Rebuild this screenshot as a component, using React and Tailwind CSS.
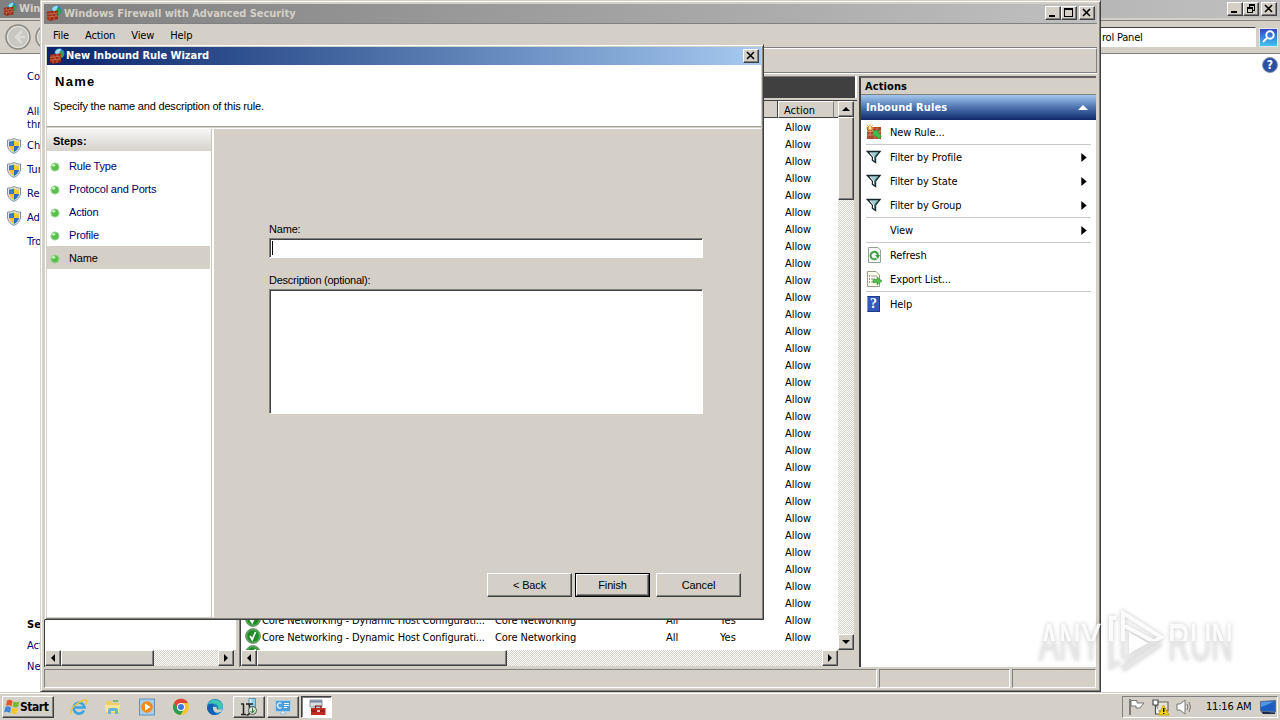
import React from 'react';

const steps = ['Rule Type', 'Protocol and Ports', 'Action', 'Profile', 'Name'];

const actions = [
  { label: 'New Rule...', icon: 'rule', line: true },
  { label: 'Filter by Profile', icon: 'filter', arrow: true },
  { label: 'Filter by State', icon: 'filter', arrow: true },
  { label: 'Filter by Group', icon: 'filter', arrow: true, line: true },
  { label: 'View', arrow: true, line: true },
  { label: 'Refresh', icon: 'refresh' },
  { label: 'Export List...', icon: 'export', line: true },
  { label: 'Help', icon: 'help' },
];

const rules = Array.from({ length: 32 }, (_, i) => i);
// rows above this one lie under the wizard, only their last column shows
const firstOpenRow = 29;

const raised =
  'bg-[#d4d0c8] border border-t-white border-l-white border-r-[#404040] border-b-[#404040] shadow-[inset_-1px_-1px_0_#808080]';
const track = 'bg-[repeating-conic-gradient(#ffffff_0_25%,#d4d0c8_0_50%)] bg-[length:2px_2px]';
const tahoma = "font-['DejaVu_Sans_Condensed','DejaVu_Sans',sans-serif]";
const sans = "font-['Liberation_Sans',Arial,sans-serif]";

const FirewallIcon = ({ className }) => (
  <svg viewBox="0 0 16 16" className={className}>
    <circle cx="10.5" cy="5.5" r="5" fill="#2b86c5" />
    <path d="M6 4Q8 0 12 1L11 5L8 7Z" fill="#8fdcf5" />
    <path d="M11 3Q15 3 15 7Q14 10 12 10L10 7Z" fill="#2fa24b" />
    <path d="M1 6.500L12 5.500V14L4 16L1 14Z" fill="#9c2c16" />
    <path d="M1 9.500L12 8M1 12L12 11M4 7V9M8 6V8.5M6 9V12M10 8.5V11M4 12V15M8 11.5V15" stroke="#d98a6e" strokeWidth=".6" />
  </svg>
);

const Shield = () => (
  <svg viewBox="0 0 16 16" className="h-4 w-4 shrink-0">
    <path d="M8 .5Q11 2.5 14.500 2V8Q13.500 13 8 15.500Q2.500 13 1.500 8V2Q5 2.500 8 .5Z" fill="#dfe6ea" stroke="#83939d" />
    <path d="M8 2.500V8H3V3.500Q6 3.500 8 2.500Z" fill="#3a78c9" />
    <path d="M8 2.500Q10.500 4 13 3.500V8H8Z" fill="#f5d02c" />
    <path d="M3 8H8V14Q4 12 3 8Z" fill="#f5c51c" />
    <path d="M8 8H13Q12 12 8 14Z" fill="#2e6bbd" />
  </svg>
);

const Dot = () => (
  <svg viewBox="0 0 10 10" className="relative top-px h-[10px] w-[10px]">
    <circle cx="5" cy="5" r="4.300" fill="#5abd4c" />
    <circle cx="5" cy="5" r="4" fill="none" stroke="#a2dc9b" strokeWidth=".8" />
    <ellipse cx="3.600" cy="3.300" rx="1.800" ry="1.400" fill="#c4f0bd" />
  </svg>
);

const Check = () => (
  <svg viewBox="0 0 16 16" className="h-4 w-4 shrink-0">
    <circle cx="8" cy="8" r="7.400" fill="#1f8a26" stroke="#7d8d7d" />
    <circle cx="8" cy="8" r="6.300" fill="none" stroke="#8fd08f" strokeWidth=".6" />
    <path d="M5 8L7.200 11.500L10.500 4" fill="none" stroke="#fff" strokeWidth="1.800" />
  </svg>
);

const ActionIcon = ({ type }) => {
  if (type === 'rule')
    return (
      <svg viewBox="0 0 16 16" className="h-4 w-4">
        <path d="M1 3H15V15H1Z" fill="#b04a32" />
        <path d="M1 7.500H15M1 11H15M6 4V7M11 4V7M4 8V11M9 11V15M13 8V11" stroke="#d98f78" strokeWidth=".8" />
        <path d="M7 6.500L13 6.500L11.500 8.500L15.500 12L13 15L9 11L7 12.500Z" fill="#3fc24a" stroke="#2a8c36" strokeWidth=".5" />
        <path d="M4 0V8M0 4H8M1 1L7 7M7 1L1 7" stroke="#f3a63a" strokeWidth="1" />
        <circle cx="4" cy="4" r="1.500" fill="#fff2a8" />
      </svg>
    );
  if (type === 'filter')
    return (
      <svg viewBox="0 0 16 16" className="h-4 w-4">
        <path d="M1.500 2.500H14L9.500 8V13.500L6.500 11.500V8Z" fill="#9fcdd2" stroke="#17292e" strokeWidth="1.400" />
        <path d="M4 4L7.500 8V11" fill="none" stroke="#fff" />
        <path d="M11.500 4L8.700 8V12" fill="none" stroke="#44767b" />
      </svg>
    );
  if (type === 'refresh')
    return (
      <svg viewBox="0 0 16 16" className="h-4 w-4">
        <path d="M2.500 .5H12L14.500 3V15.500H2.500Z" fill="#f5f8f5" stroke="#96a296" />
        <path d="M10.500 11.500A3.700 3.700 0 1 1 12 8.500" fill="none" stroke="#3fa047" strokeWidth="2" />
        <path d="M9 8H14L12 12Z" fill="#3fa047" />
      </svg>
    );
  if (type === 'export')
    return (
      <svg viewBox="0 0 16 16" className="h-4 w-4">
        <path d="M1.500 .5H10L13.500 4V15.500H1.500Z" fill="#fffef0" stroke="#9a9a86" />
        <path d="M3 5H4M3 8H4M3 11H4" stroke="#333" />
        <path d="M5 5H11M5 8H9M5 11H9" stroke="#9a9a9a" />
        <path d="M7 8.500H11V6L16 10L11 14V11.500H7Z" fill="#57bd4b" stroke="#2f8f31" strokeWidth=".6" />
      </svg>
    );
  if (type === 'help')
    return (
      <span className="ml-px flex h-4 w-[13px] items-center justify-center border border-[#1c3c8c] border-l-[#7f98d8] bg-[#3459b8] font-['Liberation_Serif',serif] text-[14px] font-bold leading-none text-white">
        ?
      </span>
    );
  return null;
};

const Caption = ({ kind }) => (
  <span className={`flex h-[14px] w-4 items-center justify-center ${raised}`}>
    <svg viewBox="0 0 12 10" className="h-[10px] w-3" shapeRendering="crispEdges" fill="none" stroke="#000">
      {kind === 'min' && <path d="M2 8H8" strokeWidth="2" />}
      {kind === 'max' && <path d="M1.500 1V8.500H9.500V1M1 1H10" strokeWidth="1.400" />}
      {kind === 'restore' && <path d="M4 1H10M4.500 1V3M9.500 1V6.500H8M2 4H8M2.500 4V8.500H7.500V4" strokeWidth="1.300" />}
      {kind === 'close' && <path d="M2 1L9 8M9 1L2 8" strokeWidth="1.600" shapeRendering="auto" />}
    </svg>
  </span>
);

const ArrowButton = ({ dir }) => (
  <span className={`flex h-4 w-4 shrink-0 items-center justify-center ${raised}`}>
    <svg viewBox="0 0 8 8" className="h-2 w-2">
      {dir === 'left' && <path d="M6 0V8L2 4Z" />}
      {dir === 'right' && <path d="M2 0V8L6 4Z" />}
      {dir === 'up' && <path d="M0 6H8L4 2Z" />}
      {dir === 'down' && <path d="M0 2H8L4 6Z" />}
    </svg>
  </span>
);

const ControlPanel = () => (
  <div className={`absolute inset-x-0 top-0 h-[692px] bg-white text-[11px] ${tahoma}`}>
    <div className="flex h-[18px] items-center justify-between bg-linear-to-r from-[#808080] to-[#c0c0c0] pl-[3px] pr-[3px]">
      <div className="flex items-center gap-[2px] font-bold text-[#d4d0c8]">
        <FirewallIcon className="h-[14px] w-[14px]" />
        <span className="pt-px">Windows Firewall</span>
      </div>
      <div className="flex">
        <Caption kind="min" />
        <Caption kind="restore" />
        <span className="w-[2px]" />
        <Caption kind="close" />
      </div>
    </div>
    <div className="h-[2px] bg-[#d4d0c8]" />
    <div className="flex h-[34px] items-center justify-between border-y border-[#808080] bg-[#d4d0c8] pl-[5px] pr-[2px]">
      <div className="flex gap-1">
        {['M17 7L11 13L17 19M11 13H20', 'M9 7L15 13L9 19'].map((d) => (
          <svg key={d} viewBox="0 0 26 26" className="h-[26px] w-[26px]">
            <circle cx="13" cy="13" r="12" fill="#c9c7c2" stroke="#8a8883" strokeWidth="1.500" />
            <circle cx="13" cy="13" r="10.500" fill="none" stroke="#e9e7e2" />
            <path d={d} fill="none" stroke="#dedcd7" strokeWidth="2.500" />
          </svg>
        ))}
      </div>
      <div className="flex items-center gap-[3px]">
        <div className="flex h-5 w-[180px] items-center border border-t-[#404040] border-b-white border-r-white bg-white pl-[25px] pt-[2px]">
          <span className="tracking-[-0.2px]">rol Panel</span>
        </div>
        <span className="flex h-[19px] w-[19px] items-center justify-center border border-[#dfe6f2] bg-linear-to-b from-[#3346c4] to-[#45c2ee]">
          <svg viewBox="0 0 16 16" className="h-4 w-4" fill="none" stroke="#fff" strokeWidth="2">
            <circle cx="9" cy="6" r="3.700" />
            <path d="M6 9L2 13" />
          </svg>
        </span>
      </div>
    </div>
    <div className="flex justify-between">
      <div className="flex flex-col pl-[27px] pt-4 text-[#00006b]">
        <span className="h-[35px] leading-[14px]">Control Panel Home</span>
        <span className="h-[13px] leading-[14px]">Allow a program</span>
        <span className="h-4 leading-[14px]">through</span>
        {['Change', 'Turn', 'Restore', 'Advanced'].map((t) => (
          <span key={t} className="-ml-[21px] flex h-6 items-center gap-[5px]">
            <Shield />
            {t}
          </span>
        ))}
        <span className="h-6 leading-6">Troubleshoot</span>
        <span className="mt-[364px] h-[21px] leading-[14px] font-bold text-black">See also</span>
        <span className="h-[21px] leading-[14px]">Action Center</span>
        <span className="leading-[14px]">Network</span>
      </div>
      <span className="mr-[2px] mt-[3px] flex h-4 w-4 items-center justify-center rounded-full border border-[#8794b4] bg-[#2a51a3] text-[12px] font-bold text-white">
        ?
      </span>
    </div>
  </div>
);

const RuleList = () => (
  <div className="flex w-[618px] flex-col border-l border-[#808080] bg-white">
    <div className="mr-[2px] h-[22px] shrink-0 border-t border-[#808080] bg-[#404040]" />
    <div className="h-[2px] shrink-0 bg-[#d4d0c8]" />
    <div className="flex h-[550px] border-l border-t border-[#404040]">
      <div className="flex-1 overflow-hidden">
        <div className="flex h-[17px] justify-end bg-[#d4d0c8]">
          <span className="w-[200px] border-b border-r border-b-[#404040] border-r-[#404040]" />
          <span className="w-[56px] border border-t-white border-l-white border-r-[#808080] border-b-[#404040] pl-[5px] leading-[18px]">
            Action
          </span>
          <span className="w-1 border-b border-[#404040]" />
        </div>
        {rules.map((r) => (
          <div key={r} className="flex h-[17px] justify-between pl-1 pr-[27px] leading-[19px]">
            {r >= firstOpenRow && (
              <div className="flex">
                <Check />
                <span className="w-[234px] pl-px tracking-[-0.14px]">Core Networking - Dynamic Host Configurati...</span>
                <span className="w-[171px] tracking-[-0.1px]">Core Networking</span>
                <span className="w-[54px]">All</span>
                <span>Yes</span>
              </div>
            )}
            <span className="ml-auto tracking-[-0.1px]">Allow</span>
          </div>
        ))}
      </div>
      <div className={`flex w-4 flex-col ${track}`}>
        <ArrowButton dir="up" />
        <span className={`h-[83px] ${raised}`} />
        <span className="flex-1" />
        <ArrowButton dir="down" />
      </div>
      <div className="w-[3px] bg-[#d4d0c8]" />
    </div>
    <div className="flex h-4 border-l border-[#404040] bg-[#d4d0c8]">
      <div className={`flex w-[597px] ${track}`}>
        <ArrowButton dir="left" />
        <span className={`w-[250px] ${raised}`} />
        <span className="flex-1" />
        <ArrowButton dir="right" />
      </div>
    </div>
    <div className="h-px bg-[#d4d0c8]" />
  </div>
);

const ActionsPane = () => (
  <div className="flex w-[237px] flex-col border-l-2 border-t-2 border-l-[#404040] border-t-[#606060] bg-white">
    <div className="h-[17px] border-b border-[#808080] bg-[#d4d0c8] pl-1 font-bold leading-[17px] tracking-[0.1px]">Actions</div>
    <div className="flex h-[25px] items-center justify-between bg-linear-to-b from-[#a4c8ec] via-[#4d74b0] to-[#12286a] pl-[5px] pr-[8px] font-bold text-white">
      <span className="pt-[2px] tracking-[0.1px]">Inbound Rules</span>
      <svg viewBox="0 0 10 5" className="h-[5px] w-[10px]">
        <path d="M0 5H10L5 0Z" fill="#fff" />
      </svg>
    </div>
    {actions.map((a) => (
      <div key={a.label} className="px-[5px]">
        <div className="flex h-6 items-center">
          <span className="flex w-6 items-center">
            <ActionIcon type={a.icon} />
          </span>
          <span className="flex-1 pt-[2px] tracking-[-0.1px]">{a.label}</span>
          {a.arrow && (
            <svg viewBox="0 0 6 10" className="mr-1 h-[9px] w-[6px]">
              <path d="M0 0V10L6 5Z" />
            </svg>
          )}
        </div>
        {a.line && <div className="h-px bg-[#c8c8c8]" />}
      </div>
    ))}
  </div>
);

const FirewallWindow = () => (
  <div
    className={`absolute left-[40px] top-0 flex h-[692px] w-[1061px] flex-col border border-l-[#d4d0c8] border-t-[#d4d0c8] border-r-[#404040] border-b-[#404040] bg-[#d4d0c8] px-[3px] pb-[2px] pt-[3px] text-[11px] shadow-[inset_1px_1px_0_#fff,inset_-1px_-1px_0_#808080] ${tahoma}`}
  >
    <div className="flex h-[19px] shrink-0 items-center justify-between bg-linear-to-r from-[#808080] to-[#c0c0c0] pb-px pl-[2px] pr-[2px]">
      <div className="flex items-center gap-[2px] font-bold text-[#d4d0c8]">
        <FirewallIcon className="h-4 w-4" />
        <span className="pt-[2px] tracking-[-0.05px]">Windows Firewall with Advanced Security</span>
      </div>
      <div className="flex">
        <Caption kind="min" />
        <Caption kind="max" />
        <span className="w-[2px]" />
        <Caption kind="close" />
      </div>
    </div>
    <div className="flex h-[25px] shrink-0 items-center gap-4 border-b border-t border-[#808080] pl-[9px] pt-px tracking-[-0.12px]">
      <span>File</span>
      <span>Action</span>
      <span>View</span>
      <span>Help</span>
    </div>
    <div className="h-[25px] shrink-0 border-b border-r border-t border-b-[#808080] border-r-[#808080] border-t-white" />
    <div className="h-[3px] shrink-0 border-t border-white" />
    <div className="flex h-[591px] shrink-0">
      <div className="flex w-[192px] flex-col justify-end border-l border-t border-[#404040] bg-white">
        <div className="flex h-4 bg-white">
          <div className={`flex flex-1 ${track}`}>
            <ArrowButton dir="left" />
            <span className={`w-[93px] ${raised}`} />
            <span className="flex-1" />
            <ArrowButton dir="right" />
          </div>
          <div className="w-[2px] bg-[#d4d0c8]" />
        </div>
        <div className="h-px bg-[#d4d0c8]" />
      </div>
      <div className="w-[3px]" />
      <RuleList />
      <div className="w-[2px]" />
      <ActionsPane />
    </div>
    <div className="mt-[2px] flex h-[19px] shrink-0 gap-[2px]">
      <div className="w-[833px] border border-b-white border-l-[#808080] border-r-white border-t-[#808080]" />
      <div className="w-[131px] border border-b-white border-l-[#808080] border-r-white border-t-[#808080]" />
      <div className="w-[84px] border border-b-white border-l-[#808080] border-r-white border-t-[#808080]" />
    </div>
  </div>
);

const WizardDialog = () => (
  <div
    className={`absolute left-[44px] top-[44px] flex h-[576px] w-[720px] flex-col border border-l-[#d4d0c8] border-t-[#d4d0c8] border-r-[#404040] border-b-[#404040] bg-[#d4d0c8] p-[2px] text-[11px] text-black shadow-[inset_1px_1px_0_#fff,inset_-1px_-1px_0_#808080] ${sans}`}
  >
    <div className="flex h-[18px] shrink-0 items-center justify-between bg-linear-to-r from-[#0a246a] to-[#a6caf0] pl-[2px] pr-[2px]">
      <div className={`flex items-center gap-px font-bold text-white ${tahoma}`}>
        <FirewallIcon className="h-4 w-4" />
        <span className="pt-px tracking-[-0.03px]">New Inbound Rule Wizard</span>
      </div>
      <Caption kind="close" />
    </div>
    <div className="h-[61px] shrink-0 bg-white">
      <div className="pl-2 pt-[9px] text-[13px] font-bold leading-[16px] tracking-[1.3px]">Name</div>
      <div className="pl-[6px] pt-[10px] leading-[13px] tracking-[-0.19px]">Specify the name and description of this rule.</div>
    </div>
    <div className="h-[3px] shrink-0 border-b border-t border-b-white border-t-[#a0a0a0]" />
    <div className="flex flex-1">
      <div className="w-[165px] border-r border-[#c8c4bc] bg-white">
        <div className="h-[22px] bg-linear-to-b from-[#f7f6f5] to-[#d6d2cb] pl-[6px] font-bold leading-[24px]">Steps:</div>
        <div className="pt-[3px]">
          {steps.map((s) => (
            <div
              key={s}
              className={
                s === 'Name'
                  ? 'mr-px flex h-[23px] items-center gap-[9px] bg-[#d4d0c8] pl-[3px]'
                  : 'flex h-[23px] items-center gap-[9px] pl-[3px] text-[#00006b]'
              }
            >
              <Dot />
              <span className="pt-[2px] tracking-[-0.18px]">{s}</span>
            </div>
          ))}
        </div>
      </div>
      <div className="w-[2px] bg-white" />
      <div className="flex flex-1 flex-col pl-[55px]">
        <label className="mt-[94px] leading-[13px] tracking-[-0.18px]">Name:</label>
        <div className="mt-[2px] h-5 w-[434px] border border-b-white border-l-[#808080] border-r-white border-t-[#808080] bg-white pl-px pt-[2px] shadow-[inset_1px_1px_0_#404040]">
          <div className="h-[14px] w-[2px] border-r border-black" />
        </div>
        <label className="mt-[16px] leading-[13px] tracking-[-0.25px]">Description (optional):</label>
        <div className="mt-[2px] h-[125px] w-[434px] border border-b-white border-l-[#808080] border-r-white border-t-[#808080] bg-white shadow-[inset_1px_1px_0_#404040]" />
        <div className="mt-[159px] flex pl-[218px] tracking-[-0.15px]">
          <button className={`h-6 w-[85px] ${raised}`}>&lt; Back</button>
          <span className="ml-[3px] flex h-6 w-[75px] border border-black">
            <button className={`w-full ${raised}`}>Finish</button>
          </span>
          <button className={`ml-[6px] h-6 w-[85px] ${raised}`}>Cancel</button>
        </div>
      </div>
    </div>
  </div>
);

const StartFlag = () => (
  <svg viewBox="0 0 16 16" className="h-4 w-4 shrink-0">
    <path d="M3 1.500Q6 0 8.500 2L7.500 7.500Q5 5.500 2 7Z" fill="#e8572a" />
    <path d="M9.500 2.500Q12 4 15.500 2.500L14 8Q11 9 8.500 7.500Z" fill="#7cb82f" />
    <path d="M1.500 8Q4 6.500 7 8.500L6 14Q3 12 0 13.500Z" fill="#3d87d8" />
    <path d="M8 8.800Q11 10 14 9L12.500 14.500Q10 15.500 7 14Z" fill="#f7c52b" />
  </svg>
);

const Taskbar = () => (
  <div
    className={`absolute inset-x-0 bottom-0 flex h-[28px] items-start justify-between border-t border-[#d4d0c8] bg-[#d4d0c8] pl-[2px] pr-[2px] pt-[3px] text-[11px] shadow-[inset_0_1px_0_#fff] ${tahoma}`}
  >
    <div className="flex items-center">
      <span className={`flex h-[22px] w-[52px] items-center pl-px text-[12px] font-bold tracking-[-0.45px] ${raised}`}>
        <StartFlag />
        Start
      </span>
      <div className="ml-[16px] flex items-center gap-[16px]">
        <svg viewBox="0 0 18 18" className="h-[18px] w-[18px]">
          <path d="M14 12.500A5.500 5.500 0 1 1 14.500 9.500H5" fill="none" stroke="#3ba4e0" strokeWidth="2.600" />
          <path d="M1 16Q-1 11 8 5Q16 0 17 3Q17 5 15 6" fill="none" stroke="#efc33c" strokeWidth="1.500" />
        </svg>
        <svg viewBox="0 0 18 18" className="h-[18px] w-[18px]">
          <path d="M2 3H7L8 5H15V15H2Z" fill="#f1cc65" />
          <path d="M1 7H16L15 14H2Z" fill="#fbe59a" />
          <path d="M4 16V12Q4 10 6 10H12Q14 10 14 12V16H11V13H7V16Z" fill="#67b2df" />
          <path d="M9 3H14" stroke="#5fae5a" strokeWidth="1.500" />
        </svg>
        <svg viewBox="0 0 18 18" className="h-[18px] w-[18px]">
          <rect x="1.500" y="1" width="15" height="16" fill="#a8cdec" stroke="#5e92be" />
          <circle cx="9" cy="9" r="5.800" fill="#f08a1c" />
          <path d="M7 5.500V12.500L12.500 9Z" fill="#fff" />
        </svg>
        <svg viewBox="0 0 18 18" className="h-[18px] w-[18px]">
          <circle cx="9" cy="9" r="8" fill="#f6c52d" />
          <path d="M2 5A8 8 0 0 1 16 5H9L5.500 11Z" fill="#df4535" />
          <path d="M2 5A8 8 0 0 0 8.500 17L12 11L6 11Z" fill="#2c9d50" />
          <circle cx="9" cy="9" r="4" fill="#fff" />
          <circle cx="9" cy="9" r="3" fill="#3a78e0" />
        </svg>
        <svg viewBox="0 0 18 18" className="h-[18px] w-[18px]">
          <circle cx="9" cy="9" r="8" fill="#1b7fce" />
          <path d="M2 6A8 8 0 0 1 17 9Q17 12 12 12Q13 7 9 6Q5 5 2 6Z" fill="#3ec6b0" />
          <path d="M7 9Q6 13 10 14.500Q13 15 15.500 13.500L16 11Q14 12 11.500 11.500Q10 10 10.500 9Z" fill="#d4d0c8" />
          <path d="M1 10Q2 5 8 6Q5 10 9 15L11 17Q2 18 1 10Z" fill="#1560b0" />
        </svg>
      </div>
      <div className="ml-[9px] flex items-center gap-[2px]">
        <span className={`flex h-[22px] w-[32px] items-center justify-center ${raised}`}>
          <svg viewBox="0 0 18 18" className="h-[18px] w-[18px]">
            <path d="M9 .5H15.500V9H9Z" fill="#8fd0ee" stroke="#5b8fb0" />
            <path d="M10.500 1V8" stroke="#e6f7fd" strokeWidth="1.500" />
            <path d="M1 6H4M3.500 6V16.500M1 16.500H6M6 6H13M9.500 6V15Q9 17.500 6.500 17" fill="none" stroke="#222" strokeWidth="1.500" />
            <circle cx="12.500" cy="12.500" r="4" fill="#dcebdc" stroke="#333" strokeWidth=".8" />
            <path d="M12.500 9.500V15M10.500 13L12.500 15L14.500 12" fill="none" stroke="#2f7b39" />
          </svg>
        </span>
        <span className={`flex h-[22px] w-[32px] items-center justify-center ${raised}`}>
          <svg viewBox="0 0 18 18" className="h-[18px] w-[18px]">
            <rect x="1.500" y="2.500" width="15" height="11" fill="#4a9edb" stroke="#a9cfe9" />
            <path d="M7.500 5.500A2.500 2.500 0 1 0 7.500 9.500" fill="none" stroke="#e2f1fb" strokeWidth="1.400" />
            <path d="M10 5.500H15M10 7.500H15M10 9.500H13" stroke="#fff" />
            <path d="M6 16H12L10 13H8Z" fill="#dcebf4" stroke="#8fb3cc" strokeWidth=".8" />
          </svg>
        </span>
        <span className="flex h-[22px] w-[31px] items-center justify-center border border-b-white border-l-[#404040] border-r-white border-t-[#404040] bg-white shadow-[inset_1px_1px_0_#808080]">
          <svg viewBox="0 0 18 18" className="mt-[2px] h-[18px] w-[18px]">
            <path d="M2 1H14V8H2Z" fill="#d8dce0" stroke="#8c959e" />
            <path d="M2 2.500H14" stroke="#7687a0" strokeWidth="2" />
            <path d="M3 9H17.500V16H3Z" fill="#c02a22" />
            <path d="M7.500 9V7H13V9M3 12H17" fill="none" stroke="#7b120e" strokeWidth="1.200" />
            <path d="M9 11H12V13H9Z" fill="#e8c6c0" />
          </svg>
        </span>
      </div>
    </div>
    <div className="flex h-[22px] w-[156px] items-center border border-b-white border-l-[#808080] border-r-white border-t-[#808080] pl-[5px]">
      <svg viewBox="0 0 18 18" className="h-[18px] w-[18px] shrink-0">
        <path d="M2 1V17" stroke="#606060" strokeWidth="1.500" />
        <path d="M3 2.500H9V5H16L14 7.500L12 10H8V8H3Z" fill="#fff" stroke="#777" />
      </svg>
      <svg viewBox="0 0 18 18" className="ml-[6px] h-[18px] w-[18px] shrink-0">
        <path d="M5 4H16V13H5Z" fill="#e6e4d6" stroke="#6b6b5c" strokeWidth="1.200" />
        <path d="M1 2H6V7H1ZM3.500 7V16H8" fill="#fff" stroke="#4c4c4c" strokeWidth="1.200" />
        <path d="M11.500 7L17 17H6.500Z" fill="#f5d01e" stroke="#c9a400" />
        <path d="M11.700 10V14M11.700 15V16" stroke="#000" strokeWidth="1.400" />
      </svg>
      <svg viewBox="0 0 18 18" className="ml-[6px] h-[18px] w-[18px] shrink-0" fill="none" stroke="#777">
        <path d="M1 6H4L9 2V16L4 12H1Z" fill="#fff" />
        <path d="M11 6Q13 9 11 12M13 4Q16 9 13 14" />
      </svg>
      <span className="ml-[12px] w-[54px] shrink-0 whitespace-nowrap tracking-[-0.2px]">11:16 AM</span>
      <svg viewBox="0 0 16 14" className="h-[14px] w-4 shrink-0">
        <path d="M.5 1.500L15.500 .5V12L.5 11Z" fill="#1d5fc0" stroke="#5b6d86" />
        <path d="M1 2L14 1.500Q8 5 1 7Z" fill="#4f97e6" />
        <path d="M1 11.500L15 12.500V14H3Z" fill="#1a2c4e" />
      </svg>
    </div>
  </div>
);

const Watermark = () => (
  <svg
    viewBox="0 0 200 70"
    className="absolute left-[1036px] top-[606px] h-[70px] w-[200px] overflow-visible font-['Liberation_Sans',Arial,sans-serif] drop-shadow-[0_0_2px_rgba(0,0,0,0.25)]"
  >
    <defs>
      <linearGradient id="fade" gradientUnits="userSpaceOnUse" x1="0" y1="0" x2="0" y2="70">
        <stop offset=".5" stopColor="#fff" stopOpacity=".9" />
        <stop offset=".5" stopColor="#e8e8e8" stopOpacity=".6" />
      </linearGradient>
    </defs>
    <g fill="url(#fade)" stroke="url(#fade)" strokeWidth=".6" fontSize="52">
      <text x="3" y="54" textLength="62" lengthAdjust="spacingAndGlyphs">ANY</text>
      <text x="132" y="54" textLength="65" lengthAdjust="spacingAndGlyphs">RUN</text>
    </g>
    <g fill="none" stroke="url(#fade)" strokeWidth="4">
      <path d="M87 52V7L125 31L89 54" />
      <path d="M89 20L122 38L86 62M80 12H75V61L84 56" />
      <path d="M125 38L87 64" />
    </g>
    <path d="M93 26L112 37L93 48Z" fill="#fff" />
  </svg>
);

const App = () => {
  return (
    <div className="relative h-[720px] w-[1280px] overflow-hidden bg-white text-black whitespace-nowrap">
      <ControlPanel />
      <FirewallWindow />
      <WizardDialog />
      <Taskbar />
      <Watermark />
    </div>
  );
};

export default App;
